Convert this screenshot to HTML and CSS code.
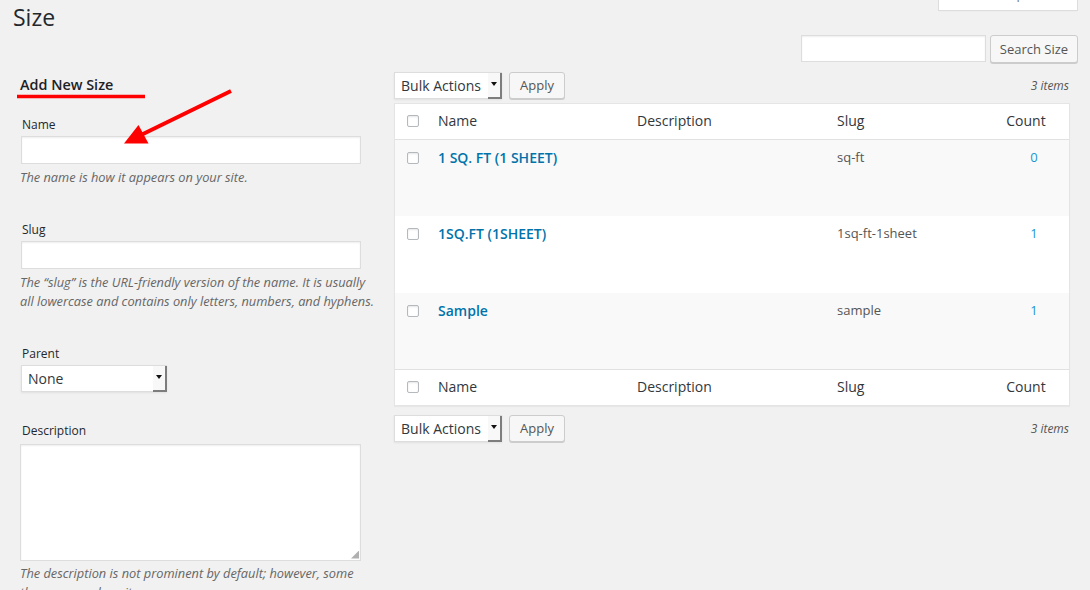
FILE: index.html
```html
<!DOCTYPE html>
<html>
<head>
<meta charset="utf-8">
<title>Size</title>
<link rel="stylesheet" href="styles.css">
</head>
<body>
<div class="page">
  <div class="top">
    <h1 class="title">Size</h1>
    <div class="screen-tab">Screen Options</div>
  </div>
  <div class="search-row">
    <div class="input search-input"></div>
    <div class="button search-btn">Search Size</div>
  </div>
  <div class="cols">
    <div class="col-left">
      <h2 class="add-title">Add New Size</h2>
      <div class="field field-name">
        <div class="label">Name</div>
        <div class="input text-input"></div>
        <p class="hint">The name is how it appears on your site.</p>
      </div>
      <div class="field field-slug">
        <div class="label">Slug</div>
        <div class="input text-input"></div>
        <p class="hint">The “slug” is the URL-friendly version of the name. It is usually<br>all lowercase and contains only letters, numbers, and hyphens.</p>
      </div>
      <div class="field field-parent">
        <div class="label">Parent</div>
        <div class="select parent-select"><span class="sel-text">None</span><span class="sel-arrow"></span></div>
      </div>
      <div class="field field-desc">
        <div class="label">Description</div>
        <div class="input textarea"><span class="grip"></span></div>
        <p class="hint">The description is not prominent by default; however, some<br>themes may show it.</p>
      </div>
    </div>
    <div class="col-right">
      <div class="tablenav">
        <div class="select bulk-select"><span class="sel-text">Bulk Actions</span><span class="sel-arrow"></span></div>
        <div class="button apply-btn">Apply</div>
        <div class="num">3 items</div>
      </div>
      <table class="terms">
        <colgroup>
          <col class="c-check"><col class="c-name"><col class="c-desc"><col class="c-slug"><col class="c-count">
        </colgroup>
        <thead>
          <tr>
            <th class="check"><span class="cb"></span></th>
            <th>Name</th>
            <th>Description</th>
            <th>Slug</th>
            <th class="count-h">Count</th>
          </tr>
        </thead>
        <tbody>
          <tr class="alt">
            <td class="check"><span class="cb"></span></td>
            <td><a class="term-link">1 SQ. FT (1 SHEET)</a></td>
            <td></td>
            <td class="slug">sq-ft</td>
            <td class="count"><a class="count-link">0</a></td>
          </tr>
          <tr class="mid">
            <td class="check"><span class="cb"></span></td>
            <td><a class="term-link">1SQ.FT (1SHEET)</a></td>
            <td></td>
            <td class="slug">1sq-ft-1sheet</td>
            <td class="count"><a class="count-link">1</a></td>
          </tr>
          <tr class="alt">
            <td class="check"><span class="cb"></span></td>
            <td><a class="term-link">Sample</a></td>
            <td></td>
            <td class="slug">sample</td>
            <td class="count"><a class="count-link">1</a></td>
          </tr>
        </tbody>
        <tfoot>
          <tr>
            <th class="check"><span class="cb"></span></th>
            <th>Name</th>
            <th>Description</th>
            <th>Slug</th>
            <th class="count-h">Count</th>
          </tr>
        </tfoot>
      </table>
      <div class="tablenav bottom">
        <div class="select bulk-select"><span class="sel-text">Bulk Actions</span><span class="sel-arrow"></span></div>
        <div class="button apply-btn">Apply</div>
        <div class="num">3 items</div>
      </div>
    </div>
  </div>
  <svg class="annot" width="1090" height="590" viewBox="0 0 1090 590">
    <line x1="17" y1="96.5" x2="145" y2="96.5" stroke="#ff0000" stroke-width="3.5"/>
    <line x1="231" y1="91" x2="142" y2="134.5" stroke="#ff0000" stroke-width="4"/>
    <polygon points="124,143.5 138.5,125 148.5,143.5" fill="#ff0000"/>
  </svg>
</div>
</body>
</html>
```
FILE: styles.css
```css
html, body {
  margin: 0;
  padding: 0;
  background: #f1f1f1;
  overflow: hidden;
}
body {
  font-family: "Open Sans", "DejaVu Sans", sans-serif;
  font-size: 13px;
  color: #444;
}
.page {
  position: relative;
  width: 1090px;
  height: 590px;
  overflow: hidden;
  box-sizing: border-box;
  padding: 0 12px 0 13px;
}
.top {
  display: flex;
  justify-content: space-between;
  align-items: flex-start;
  height: 32px;
}
.title {
  margin: 3px 0 0;
  font-size: 23px;
  font-weight: 400;
  line-height: 29px;
  color: #23282d;
}
.screen-tab {
  margin-top: -18px;
  width: 140px;
  height: 29px;
  box-sizing: border-box;
  background: #fff;
  border: 1px solid #ddd;
  border-top: none;
  box-shadow: 0 1px 1px -1px rgba(0,0,0,.1);
  color: #72777c;
  font-size: 13px;
  line-height: 24px;
  text-align: center;
}
.search-row {
  display: flex;
  justify-content: flex-end;
  gap: 4px;
  margin-top: 3px;
  height: 28px;
}
.input {
  box-sizing: border-box;
  background: #fff;
  border: 1px solid #ddd;
  box-shadow: inset 0 1px 2px rgba(0,0,0,.07);
}
.search-input {
  width: 185px;
  height: 27px;
}
.button {
  box-sizing: border-box;
  height: 28px;
  padding: 0 10px 1px;
  border: 1px solid #ccc;
  border-radius: 3px;
  background: #f7f7f7;
  box-shadow: 0 1px 0 #ccc;
  color: #555;
  font-size: 13px;
  line-height: 26px;
  white-space: nowrap;
}
.search-btn {
  width: 88px;
  text-align: center;
  padding: 0;
}
.cols {
  display: flex;
  margin-top: 9px;
}
.col-left {
  width: 381px;
  padding-left: 7px;
  box-sizing: border-box;
}
.col-right {
  flex: 1;
  padding-right: 8px;
}
.add-title {
  margin: 3px 0 0;
  font-size: 14.4px;
  font-weight: 600;
  line-height: 20px;
  color: #1d2125;
}
.label {
  font-size: 12px;
  line-height: 16px;
  color: #23282d;
  padding-left: 2px;
}
.field-name { margin-top: 21.5px; }
.field-slug { margin-top: 35px; }
.field-parent { margin-top: 35px; }
.field-desc { margin-top: 31px; }
.text-input {
  margin-top: 3.5px;
  margin-left: 1px;
  width: 340px;
  height: 28px;
}
.hint {
  margin: 3.5px 0 0;
  font-size: 12.8px;
  line-height: 19px;
  font-style: italic;
  color: #666;
  width: 370px;
  white-space: nowrap;
}
.select {
  box-sizing: border-box;
  display: flex;
  align-items: center;
  background: #fff;
  border: 1px solid #ddd;
  box-shadow: 0 1px 2px rgba(0,0,0,.07);
  color: #32373c;
  font-size: 14px;
  position: relative;
}
.sel-text {
  flex: 1;
  padding-left: 6px;
  line-height: 25px;
}
.sel-arrow {
  align-self: stretch;
  width: 14px;
  margin: 0 -1px -1px 0;
  background: #f8f8f8;
  border-right: 2px solid #7d7d7d;
  border-bottom: 2px solid #7d7d7d;
  box-sizing: border-box;
  display: flex;
  align-items: center;
  justify-content: center;
}
.sel-arrow::after {
  content: "";
  width: 0;
  height: 0;
  border-left: 3px solid transparent;
  border-right: 3px solid transparent;
  border-top: 4px solid #111;
  margin-top: -2px;
}
.parent-select {
  margin-top: 3.5px;
  margin-left: 1px;
  width: 146px;
  height: 27px;
}
.textarea {
  position: relative;
  margin-top: 4.5px;
  width: 341px;
  height: 117px;
}
.grip {
  position: absolute;
  right: 1px;
  bottom: 1px;
  width: 8px;
  height: 8px;
  background-image: radial-gradient(circle, #aaa 0.7px, transparent 0.8px);
  background-size: 2px 2px;
  clip-path: polygon(100% 0, 100% 100%, 0 100%);
}
.tablenav {
  display: flex;
  align-items: center;
  gap: 7px;
  height: 27px;
}
.tablenav.bottom {
  margin-top: 9px;
}
.bulk-select {
  width: 108px;
  height: 27px;
}
.apply-btn {
  width: 56px;
  height: 27px;
  text-align: center;
  padding: 0;
  line-height: 25px;
}
.num {
  margin-left: auto;
  padding-right: 1px;
  font-size: 12px;
  font-style: italic;
  color: #555;
}
.terms {
  margin-top: 4px;
  width: 100%;
  border-collapse: separate;
  border-spacing: 0;
  table-layout: fixed;
  background: #fff;
  border: 1px solid #e5e5e5;
  box-shadow: 0 1px 1px rgba(0,0,0,.04);
}
.c-check { width: 33px; }
.c-name { width: 199px; }
.c-desc { width: 200px; }
.c-slug { width: 156px; }
.c-count { width: 86px; }
.terms th {
  height: 33px;
  box-sizing: content-box;
  padding: 0 10px 2px;
  text-align: left;
  font-weight: 400;
  font-size: 14px;
  color: #32373c;
  vertical-align: middle;
}
.terms thead th { border-bottom: 1px solid #e1e1e1; }
.terms tfoot th { border-top: 1px solid #e1e1e1; }
.terms th.check, .terms td.check {
  padding-left: 12px;
  padding-right: 0;
}
.terms tbody td {
  height: 76px;
  box-sizing: border-box;
  padding: 7.5px 10px 0;
  vertical-align: top;
  line-height: 19px;
  font-size: 13px;
  color: #555;
}
.terms tbody tr.mid td { height: 77px; }
.terms tbody td.check { padding-top: 11.5px; }
.terms tr.alt td { background: #f9f9f9; }
.cb {
  display: block;
  width: 12px;
  height: 12px;
  box-sizing: border-box;
  border: 1px solid #b4b9be;
  border-radius: 2px;
  background: #fff;
  box-shadow: inset 0 1px 2px rgba(0,0,0,.1);
}
.terms th .cb { margin-top: 1px; }
.term-link {
  font-size: 14px;
  font-weight: 600;
  color: #0073aa;
}
.count-h {
  text-align: center !important;
}
.terms td.count {
  text-align: center;
  padding-left: 26px;
  padding-right: 10px;
}
.count-link {
  color: #1a95d3;
}
.annot {
  position: absolute;
  left: 0;
  top: 0;
  pointer-events: none;
}
```
